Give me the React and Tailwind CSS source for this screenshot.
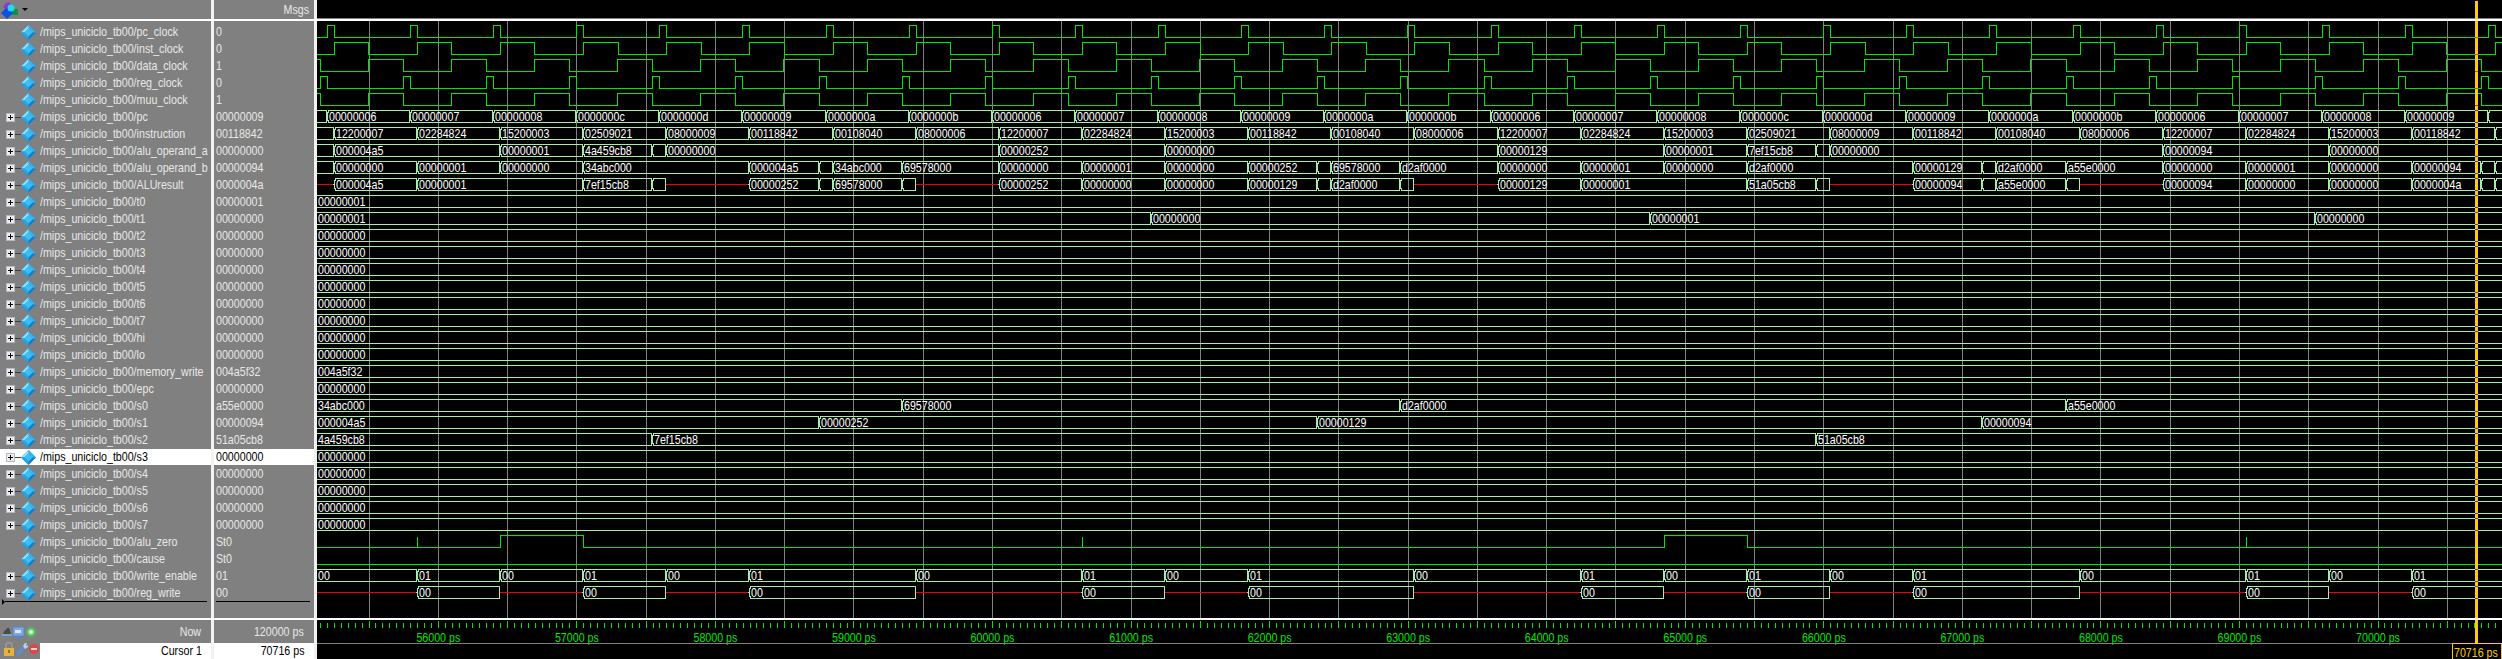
import React from 'react';

const P = 83.13;
const K = (k) => 334.3 + P * k; // instruction edge, most busses change here
const R = (k) => 320.3 + P * k; // reg_clock edge
const B = (k) => 327.3 + P * k; // pc_clock edge
const tx = (t) => 438.3 + (t - 56000) * 0.13855;

const GREEN = '#00e600';
const BUS = '#a8eca8';
const RED = '#f00000';
const CURSOR = '#ffcc00';
const CX = 2475;

const PCS = ['06', '07', '08', '0c', '0d', '09', '0a', '0b', '06', '07', '08', '09', '0a', '0b', '06', '07', '08', '0c', '0d', '09', '0a', '0b', '06', '07', '08', '09'];
const INSTR = { '06': '12200007', '07': '02284824', '08': '15200003', '0c': '02509021', '0d': '08000009', '09': '00118842', '0a': '00108040', '0b': '08000006' };

const flat = (label) => [[315, label]];
const pcSegs = [[315, null], ...PCS.map((v, k) => [B(k), '000000' + v]), [B(26), null]];
const instrSegs = [[315, null], ...PCS.map((v, k) => [K(k), INSTR[v]]), [K(26), null]];

const aSegs = [[315, null], [K(0), '000004a5'], [K(2), '00000001'], [K(3), '4a459cb8'], [R(4), null], [K(4), '00000000'], [K(8), '00000252'], [K(10), '00000000'], [K(14), '00000129'], [K(16), '00000001'], [K(17), '7ef15cb8'], [R(18), null], [K(18), '00000000'], [K(22), '00000094'], [K(24), '00000000']];
const bSegs = [[315, null], [K(0), '00000000'], [K(1), '00000001'], [K(2), '00000000'], [K(3), '34abc000'], [K(5), '000004a5'], [R(6), null], [K(6), '34abc000'], [R(7), '69578000'], [K(8), '00000000'], [K(9), '00000001'], [K(10), '00000000'], [K(11), '00000252'], [R(12), null], [K(12), '69578000'], [R(13), 'd2af0000'], [K(14), '00000000'], [K(15), '00000001'], [K(16), '00000000'], [K(17), 'd2af0000'], [K(19), '00000129'], [R(20), null], [K(20), 'd2af0000'], [R(21), 'a55e0000'], [K(22), '00000000'], [K(23), '00000001'], [K(24), '00000000'], [K(25), '00000094'], [R(26), null], [K(26), null]];
const aluSegs = [[315, 'red'], [K(0), '000004a5'], [K(1), '00000001'], [K(3), '7ef15cb8'], [R(4), null], [K(4), 'red'], [K(5), '00000252'], [R(6), null], [K(6), '69578000'], [R(7), null], [K(7), 'red'], [K(8), '00000252'], [K(9), '00000000'], [K(10), '00000000'], [K(11), '00000129'], [R(12), null], [K(12), 'd2af0000'], [R(13), null], [K(13), 'red'], [K(14), '00000129'], [K(15), '00000001'], [K(17), '51a05cb8'], [R(18), null], [K(18), 'red'], [K(19), '00000094'], [R(20), null], [K(20), 'a55e0000'], [R(21), null], [K(21), 'red'], [K(22), '00000094'], [K(23), '00000000'], [K(24), '00000000'], [K(25), '0000004a'], [R(26), null], [K(26), null]];
const t1Segs = [[315, '00000001'], [R(10), '00000000'], [R(16), '00000001'], [R(24), '00000000']];
const s0Segs = [[315, '34abc000'], [R(7), '69578000'], [R(13), 'd2af0000'], [R(21), 'a55e0000']];
const s1Segs = [[315, '000004a5'], [R(6), '00000252'], [R(12), '00000129'], [R(20), '00000094']];
const s2Segs = [[315, '4a459cb8'], [R(4), '7ef15cb8'], [R(18), '51a05cb8']];

// write_enable toggles, reg_write is its X/00 shadow
const WE = [[1, '01'], [2, '00'], [3, '01'], [4, '00'], [5, '01'], [7, '00'], [9, '01'], [10, '00'], [11, '01'], [13, '00'], [15, '01'], [16, '00'], [17, '01'], [18, '00'], [19, '01'], [21, '00'], [23, '01'], [24, '00'], [25, '01']];
const weSegs = [[315, '00'], ...WE.map(([k, v]) => [K(k), v])];
const rwSegs = [[315, 'red'], ...WE.map(([k, v]) => [K(k), v === '01' ? '00' : 'red'])];

const range = (n) => Array.from({ length: n }, (_, i) => i);
const pcClock = range(27).flatMap((k) => [B(k), B(k) + 7]);
const instClock = range(27).flatMap((k) => [K(k), K(k) + 34.4]);
const dataClock = range(27).flatMap((k) => [R(k), K(k) + 34]);
const regClock = range(27).flatMap((k) => [R(k), R(k) + 7]);

const Z = '00000000';
const ROWS = [
  { name: 'pc_clock', value: '0', clock: pcClock },
  { name: 'inst_clock', value: '0', clock: instClock },
  { name: 'data_clock', value: '1', clock: dataClock, startHigh: true },
  { name: 'reg_clock', value: '0', clock: regClock },
  { name: 'muu_clock', value: '1', clock: dataClock, startHigh: true },
  { name: 'pc', value: '00000009', segs: pcSegs },
  { name: 'instruction', value: '00118842', segs: instrSegs },
  { name: 'alu_operand_a', value: Z, segs: aSegs },
  { name: 'alu_operand_b', value: '00000094', segs: bSegs },
  { name: 'ALUresult', value: '0000004a', segs: aluSegs },
  { name: 't0', value: '00000001', segs: flat('00000001') },
  { name: 't1', value: Z, segs: t1Segs },
  ...['t2', 't3', 't4', 't5', 't6', 't7', 'hi', 'lo'].map((name) => ({ name, value: Z, segs: flat(Z) })),
  { name: 'memory_write', value: '004a5f32', segs: flat('004a5f32') },
  { name: 'epc', value: Z, segs: flat(Z) },
  { name: 's0', value: 'a55e0000', segs: s0Segs },
  { name: 's1', value: '00000094', segs: s1Segs },
  { name: 's2', value: '51a05cb8', segs: s2Segs },
  { name: 's3', value: Z, segs: flat(Z), selected: true },
  ...['s4', 's5', 's6', 's7'].map((name) => ({ name, value: Z, segs: flat(Z) })),
  { name: 'alu_zero', value: 'St0', zero: true },
  { name: 'cause', value: 'St0', low: true },
  { name: 'write_enable', value: '01', segs: weSegs },
  { name: 'reg_write', value: '00', segs: rwSegs },
];

const px = (x) => Math.floor(x) + 0.5;

// the sim font is tall and narrow, Liberation Sans squeezed to the same widths
const Txt = ({ children }) => <span className="inline-block whitespace-nowrap origin-left scale-x-[0.82]">{children}</span>;
const TxtRight = ({ children }) => <span className="inline-block whitespace-nowrap origin-right scale-x-[0.82]">{children}</span>;
const WaveText = ({ x, y, fill, anchor, children }) => (
  <text transform={`translate(${x} ${y}) scale(0.82 1)`} textAnchor={anchor} fill={fill}>{children}</text>
);

function clockPath(edges, startHigh, hi, lo) {
  let level = startHigh;
  let d = `M317 ${level ? hi : lo}`;
  edges.filter((x) => x > 317 && x < 2510).sort((a, b) => a - b).forEach((x) => {
    d += ` H${px(x)}`;
    level = !level;
    d += ` V${level ? hi : lo}`;
  });
  return d + ' H2502';
}

function BusWave({ segs, cy }) {
  const top = cy - 5.5;
  const bot = cy + 6.5;
  const mid = cy + 0.5;
  return segs.map(([x, label], i) => {
    const x0 = Math.floor(x);
    const x1 = i + 1 < segs.length ? Math.floor(segs[i + 1][0]) : 2510;
    if (label === 'red') {
      return <path key={i} d={`M${x0} ${mid} H${x1}`} stroke={RED} fill="none" />;
    }
    return (
      <g key={i}>
        <path d={`M${x0} ${mid} L${x0 + 1.5} ${top} H${x1 - 0.5} L${x1} ${mid} L${x1 - 0.5} ${bot} H${x0 + 1.5} Z`} stroke={BUS} fill="none" />
        {label && <WaveText x={Math.max(x0 + 2, 318)} y={cy + 5} fill="#ffffff">{label}</WaveText>}
      </g>
    );
  });
}

function Waves() {
  const grid = range(31).map((i) => tx(55500 + i * 500));
  return (
    <svg className="block" width="2185" height="597" viewBox="317 21 2185 597" fill="none" shapeRendering="crispEdges">
      {grid.map((x) => <path key={x} d={`M${px(x)} 21 V618`} stroke="#808080" />)}
      {ROWS.map((row, i) => {
        const cy = 31 + 17 * i;
        const hi = cy - 5.5;
        const lo = cy + 6.5;
        if (row.clock) return <path key={i} d={clockPath(row.clock, !!row.startHigh, hi, lo)} stroke={GREEN} fill="none" />;
        if (row.low) return <path key={i} d={`M317 ${lo} H2502`} stroke={GREEN} fill="none" />;
        if (row.zero) {
          return (
            <g key={i} stroke={GREEN} fill="none">
              <path d={`M317 ${lo} H${px(K(2))} V${hi} H${px(K(3))} V${lo} H${px(K(16))} V${hi} H${px(K(17))} V${lo} H2502`} />
              {[1, 9, 23].map((k) => <path key={k} d={`M${px(K(k))} ${lo} V${hi + 1}`} />)}
            </g>
          );
        }
        return <BusWave key={i} segs={row.segs} cy={cy} />;
      })}
      <rect x={CX} y="21" width="3" height="597" fill={CURSOR} />
      {ROWS.map((row, i) => {
        const cy = 31 + 17 * i;
        if (!row.segs) return null;
        return (
          <g key={i} fill="#3a3ac8">
            <rect x={CX} y={cy - 6} width="3" height="1" />
            <rect x={CX} y={cy + 6} width="3" height="1" />
          </g>
        );
      })}
      {[37, 54, 71, 88, 105].map((y) => <rect key={y} x={CX} y={y} width="3" height="1" fill="#e04000" />)}
    </svg>
  );
}

function TimeAxis() {
  const ticks = range(320).map((i) => tx(55100 + i * 50));
  const labels = range(15).map((i) => 56000 + i * 1000);
  return (
    <svg className="block" width="2185" height="39" viewBox="317 620 2185 39" fill="none" shapeRendering="crispEdges">
      {ticks.map((x, i) => {
        const major = (55100 + i * 50) % 500 === 0;
        return <path key={i} d={`M${px(x)} ${major ? 621 : 623} V628`} stroke={GREEN} />;
      })}
      {labels.map((t) => <WaveText key={t} x={tx(t)} y="642" anchor="middle" fill={GREEN}>{t} ps</WaveText>)}
      <path d="M317 643.5 H2452" stroke="#808080" />
      <rect x={CX} y="620" width="3" height="23" fill={CURSOR} />
      <path d="M2452.5 659 V643.5 H2501.5 V659" stroke={CURSOR} />
      <WaveText x="2454" y="657" fill={CURSOR}>70716 ps</WaveText>
    </svg>
  );
}

function Diamond() {
  return (
    <svg width="15" height="15" viewBox="0 0 15 15" className="shrink-0">
      <polygon points="7.5,0 15,7.5 7.5,15 0,7.5" fill="#0f7fd0" />
      <polygon points="7.5,0 15,7.5 11,7.5 7.5,3.5" fill="#36b4ee" />
      <polygon points="7.5,0 7.5,3.5 3.5,7.5 0,7.5" fill="#8fe0fa" />
      <polygon points="0,7.5 3.5,7.5 7.5,11.5 7.5,15" fill="#2aa4e6" />
      <polygon points="7.5,3.5 11.5,7.5 7.5,11.5 3.5,7.5" fill="#3cc0f4" />
    </svg>
  );
}

function PlusBox() {
  return (
    <svg width="15" height="9" viewBox="0 0 15 9" className="shrink-0">
      <rect x="0.5" y="0.5" width="8" height="8" fill="#ececf0" stroke="#b8b8c0" />
      <path d="M2 4.5 H7 M4.5 2 V7" stroke="#000000" />
      <path d="M9 4.5 H15" stroke="#404040" />
    </svg>
  );
}

function LayersIcon() {
  return (
    <svg width="18" height="18" viewBox="0 0 18 18" className="shrink-0">
      <polygon points="5,2 8,1 11,5 6,9 2,6" fill="#a030d0" />
      <rect x="10" y="8" width="7" height="6" fill="#109040" />
      <polygon points="6,6 12,12 6,18 0,12" fill="#1050e0" />
      <circle cx="10" cy="7" r="3.5" fill="#20d8f0" />
    </svg>
  );
}

function ToolIcons({ now }) {
  if (now) {
    return (
      <svg width="36" height="14" viewBox="0 0 36 14" className="shrink-0">
        <path d="M2 9 L4 5 H5 L6 3 H8 L9 5 L10 9 Z" fill="#4a4a4a" />
        <path d="M1 10 H11" stroke="#78b0f0" strokeWidth="1.5" />
        <rect x="12" y="2" width="11" height="9" fill="#7fa8e0" stroke="#5a84c4" />
        <rect x="14" y="5" width="6" height="3" fill="#d8e4f4" />
        <rect x="15" y="11" width="6" height="2" fill="#5a84c4" />
        <circle cx="30" cy="7" r="5" fill="#58b860" />
        <circle cx="30" cy="7" r="3" fill="#88d890" />
        <path d="M28 7 H32 M30 5 V9" stroke="#ffffff" />
      </svg>
    );
  }
  return (
    <svg width="40" height="16" viewBox="0 0 40 16" className="shrink-0">
      <path d="M6 7 V4 C6 1 12 1 12 4 V7" stroke="#9a9a9a" strokeWidth="1.5" fill="none" />
      <rect x="4" y="7" width="10" height="8" fill="#e8b040" />
      <rect x="8" y="9" width="2" height="3" fill="#a07020" />
      <path d="M17 14 L24 6" stroke="#5a8ce0" strokeWidth="3" />
      <path d="M23 5 L25 2 H27 L26 4 L27 5 L28 4 V6 L25 8 Z" fill="#c0d0e8" />
      <circle cx="34" cy="8" r="5" fill="#d84848" />
      <path d="M31 8 H37" stroke="#ffffff" strokeWidth="1.5" />
    </svg>
  );
}

function Divider() {
  return <div className="w-[3px] shrink-0 bg-[#f2f2f2]" />;
}

export default function App() {
  return (
    <div className="w-[2502px] h-[659px] overflow-hidden bg-[#808080] text-[13px] leading-[16px] text-[#e8e8e8] font-['Liberation_Sans',sans-serif]">
      {/* header */}
      <div className="flex h-[19px]">
        <div className="w-[211px] flex items-center gap-[3px] pl-px">
          <LayersIcon />
          <div className="w-0 h-0 border-x-[3px] border-x-transparent border-t-[3px] border-t-black" />
        </div>
        <Divider />
        <div className="w-[100px] flex items-center justify-end pr-[5px]"><TxtRight>Msgs</TxtRight></div>
        <Divider />
        <div className="relative flex-1 bg-black border-b border-[#808080]">
          <div className="absolute left-[2158px] top-px bottom-[-1px] w-[3px] bg-[#ffcc00]" />
        </div>
      </div>
      <div className="h-[2px] bg-white" />

      {/* signal rows */}
      <div className="flex h-[597px]">
        <div className="w-[211px] pt-[2px]">
          {ROWS.map((row) => (
            <div key={row.name} className="h-[17px] pt-px">
              <div className={`h-[16px] flex items-center pl-[6px] ${row.selected ? 'bg-white text-black' : ''}`}>
                <div className="w-[15px] shrink-0">{row.segs && <PlusBox />}</div>
                <Diamond />
                <div className="ml-[4px] w-[170px]"><Txt>/mips_uniciclo_tb00/{row.name}</Txt></div>
              </div>
            </div>
          ))}
          <div className="relative ml-[5px] mr-[4px] border-t border-black">
            <div className="absolute left-[-3px] top-[-3px] w-0 h-0 border-y-[3px] border-y-transparent border-l-[3px] border-l-black" />
          </div>
        </div>
        <Divider />
        <div className="w-[100px] pt-[2px]">
          {ROWS.map((row) => (
            <div key={row.name} className="h-[17px] pt-px">
              <div className={`h-[16px] flex items-center pl-[2px] ${row.selected ? 'bg-white text-black' : ''}`}><Txt>{row.value}</Txt></div>
            </div>
          ))}
          <div className="ml-[2px] mr-[4px] border-t border-black" />
        </div>
        <Divider />
        <div className="flex-1 bg-black text-[13px]">
          <Waves />
        </div>
      </div>
      <div className="h-[2px] bg-white" />

      {/* footer */}
      <div className="flex h-[39px]">
        <div className="w-[211px] flex flex-col">
          <div className="h-[23px] flex items-center justify-between pl-px pr-[10px]">
            <ToolIcons now />
            <TxtRight>Now</TxtRight>
          </div>
          <div className="h-[16px] flex">
            <div className="w-[40px] shrink-0 -mt-[2px]"><ToolIcons /></div>
            <div className="flex-1 bg-white text-black flex items-center justify-end pr-[9px]"><TxtRight>Cursor 1</TxtRight></div>
          </div>
        </div>
        <Divider />
        <div className="w-[100px] flex flex-col">
          <div className="h-[23px] flex items-center justify-end pr-[10px]"><TxtRight>120000 ps</TxtRight></div>
          <div className="h-[16px] bg-white text-black flex items-center justify-end pr-[10px]"><TxtRight>70716 ps</TxtRight></div>
        </div>
        <Divider />
        <div className="flex-1 bg-black">
          <TimeAxis />
        </div>
      </div>
    </div>
  );
}
